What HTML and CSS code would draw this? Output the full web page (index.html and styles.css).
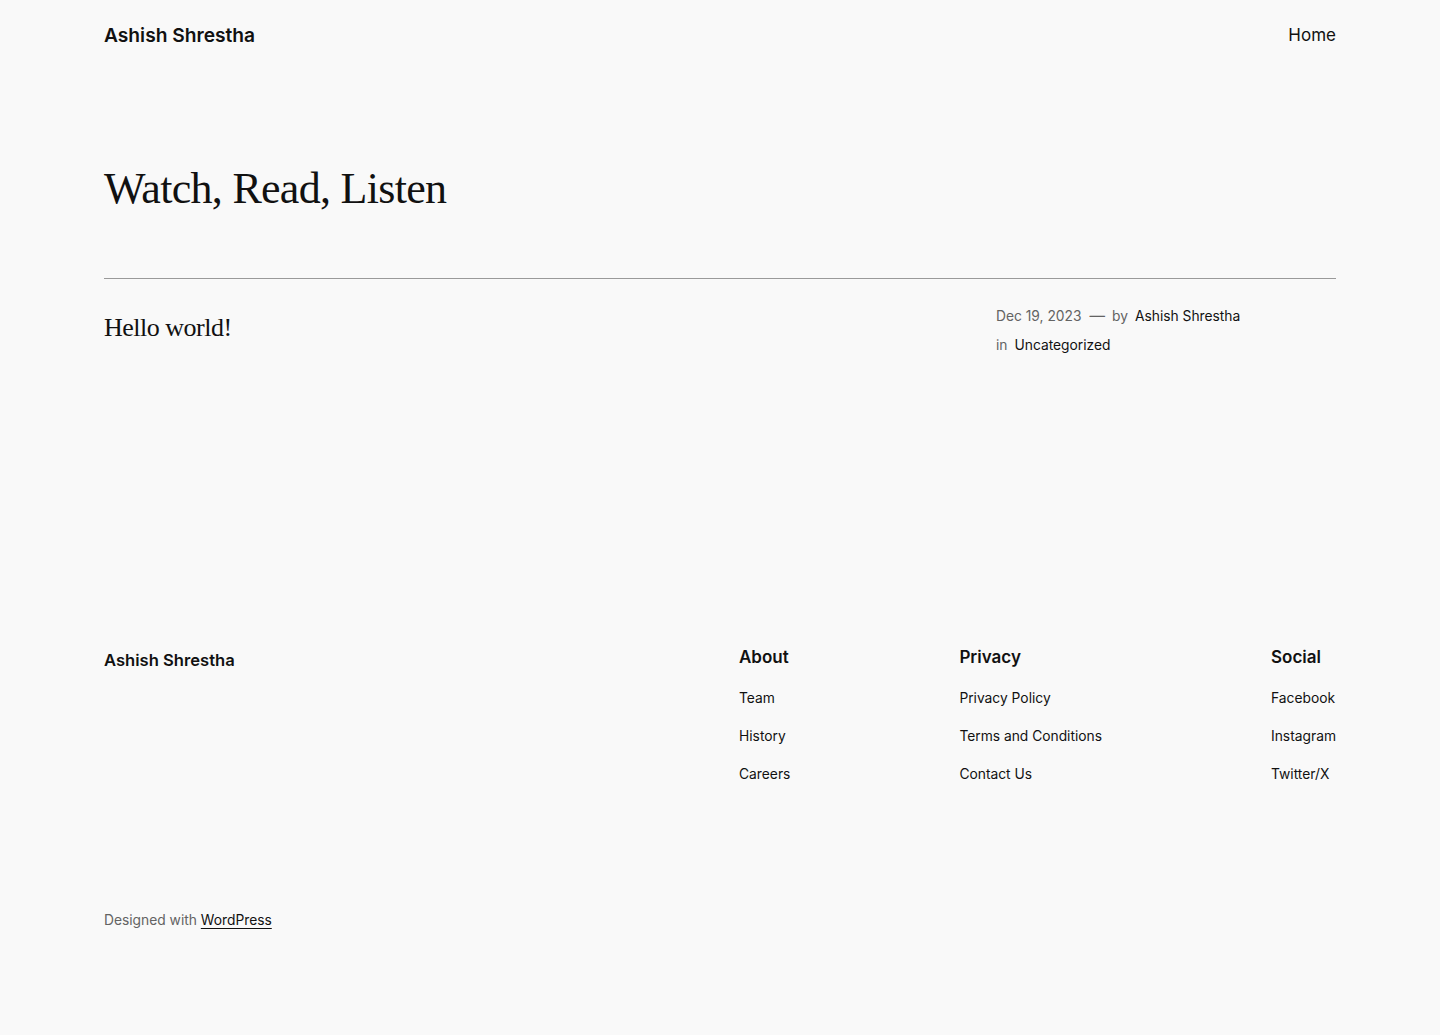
FILE: index.html
```html
<!DOCTYPE html>
<html lang="en">
<head>
<meta charset="utf-8">
<title>Watch, Read, Listen – Ashish Shrestha</title>
<link rel="stylesheet" href="styles.css">
</head>
<body>
<div class="page">
  <header class="site-header">
    <a class="site-title" href="#">Ashish Shrestha</a>
    <nav class="main-nav"><a href="#">Home</a></nav>
  </header>

  <main class="site-main">
    <h1 class="page-title">Watch, Read, Listen</h1>
    <hr class="sep">
    <article class="post-row">
      <h2 class="post-title"><a href="#">Hello world!</a></h2>
      <div class="post-meta">
        <div class="meta-line">
          <span class="muted">Dec 19, 2023</span>
          <span class="muted dash">—</span>
          <span class="muted">by</span>
          <a href="#" class="meta-link">Ashish Shrestha</a>
        </div>
        <div class="meta-line">
          <span class="muted">in</span>
          <a href="#" class="meta-link">Uncategorized</a>
        </div>
      </div>
    </article>
  </main>

  <footer class="site-footer">
    <div class="footer-top">
      <a class="footer-title" href="#">Ashish Shrestha</a>
      <div class="footer-cols">
        <div class="footer-col">
          <h3 class="col-head">About</h3>
          <ul class="col-links">
            <li><a href="#">Team</a></li>
            <li><a href="#">History</a></li>
            <li><a href="#">Careers</a></li>
          </ul>
        </div>
        <div class="footer-col">
          <h3 class="col-head">Privacy</h3>
          <ul class="col-links">
            <li><a href="#">Privacy Policy</a></li>
            <li><a href="#">Terms and Conditions</a></li>
            <li><a href="#">Contact Us</a></li>
          </ul>
        </div>
        <div class="footer-col">
          <h3 class="col-head">Social</h3>
          <ul class="col-links">
            <li><a href="#">Facebook</a></li>
            <li><a href="#">Instagram</a></li>
            <li><a href="#">Twitter/X</a></li>
          </ul>
        </div>
      </div>
    </div>
    <p class="credit">Designed with <a href="#">WordPress</a></p>
  </footer>
</div>
</body>
</html>
```

FILE: styles.css
```css
* { box-sizing: border-box; }

html, body {
  margin: 0;
  padding: 0;
  background: #f9f9f9;
}

body {
  font-family: Inter, "Noto Sans", sans-serif;
  color: #111111;
  -webkit-font-smoothing: antialiased;
}

a { color: inherit; text-decoration: none; }

.page {
  min-height: 1035px;
  padding: 0 104px;
}

/* Header */
.site-header {
  display: flex;
  justify-content: space-between;
  align-items: center;
  padding: 21px 0 19px;
}

.site-title {
  font-size: 19.2px;
  font-weight: 600;
  line-height: 28px;
}

.main-nav a {
  font-size: 17px;
  line-height: 28px;
}

/* Main */
.site-main {
  padding-top: 95px;
}

.page-title {
  margin: 0;
  font-family: "Liberation Serif", "Times New Roman", serif;
  font-weight: 400;
  font-size: 44px;
  line-height: 1.2;
  letter-spacing: -0.7px;
}

.sep {
  margin: 62px 0 0;
  border: 0;
  border-top: 1px solid #9a9a9a;
  height: 0;
}

.post-row {
  display: grid;
  grid-template-columns: 1fr 340px;
  align-items: start;
  padding-top: 26px;
}

.post-title {
  margin: 7.5px 0 0;
  font-family: "Liberation Serif", "Times New Roman", serif;
  font-weight: 400;
  font-size: 26px;
  line-height: 1.2;
  letter-spacing: -0.5px;
}

.post-meta {
  display: flex;
  flex-direction: column;
  gap: 7px;
  font-size: 13.8px;
  line-height: 22px;
}

.meta-line {
  display: flex;
  gap: 7px;
}

.muted { color: #636363; }
.dash { font-size: 15.5px; margin-left: 1px; }
.meta-link { color: #111111; }

/* Footer */
.site-footer {
  padding-top: 287px;
}

.footer-top {
  display: flex;
  justify-content: space-between;
  align-items: flex-start;
}

.footer-title {
  margin-top: 3px;
  font-size: 16.6px;
  font-weight: 600;
  line-height: 28px;
}

.footer-cols {
  width: 597px;
  display: flex;
  justify-content: space-between;
}

.col-head {
  margin: 0;
  font-size: 17px;
  font-weight: 600;
  line-height: 28px;
}

.col-links {
  list-style: none;
  margin: 16px 0 0;
  padding: 0;
  display: flex;
  flex-direction: column;
  gap: 16px;
  font-size: 13.8px;
  line-height: 22px;
}

.credit {
  margin: 124px 0 0;
  font-size: 13.8px;
  line-height: 22px;
  color: #636363;
}

.credit a {
  color: #111111;
  text-decoration: underline;
  text-underline-offset: 3px;
}
```
